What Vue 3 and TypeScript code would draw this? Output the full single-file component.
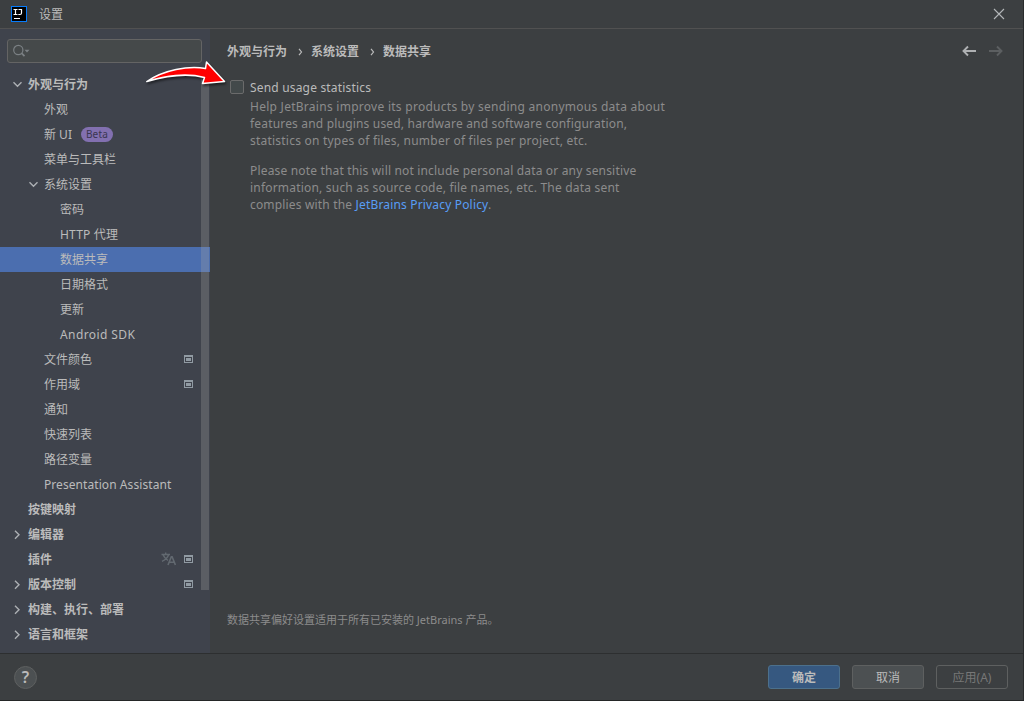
<script setup lang="ts">
interface TreeRow {
  label: string
  level: 0 | 1 | 2
  arrow?: 'open' | 'closed'
  badge?: string
  selected?: boolean
  project?: boolean
  translate?: boolean
  spacing?: string
}

interface HelpLine {
  text: string
  spacing: string
  link?: string
}

const rows: TreeRow[] = [
  { label: '外观与行为', level: 0, arrow: 'open' },
  { label: '外观', level: 1 },
  { label: '新 UI', level: 1, badge: 'Beta' },
  { label: '菜单与工具栏', level: 1 },
  { label: '系统设置', level: 1, arrow: 'open' },
  { label: '密码', level: 2 },
  { label: 'HTTP 代理', level: 2, spacing: '0.2px' },
  { label: '数据共享', level: 2, selected: true },
  { label: '日期格式', level: 2 },
  { label: '更新', level: 2 },
  { label: 'Android SDK', level: 2, spacing: '0.4px' },
  { label: '文件颜色', level: 1, project: true },
  { label: '作用域', level: 1, project: true },
  { label: '通知', level: 1 },
  { label: '快速列表', level: 1 },
  { label: '路径变量', level: 1 },
  { label: 'Presentation Assistant', level: 1, spacing: '0.07px' },
  { label: '按键映射', level: 0 },
  { label: '编辑器', level: 0, arrow: 'closed' },
  { label: '插件', level: 0, translate: true, project: true },
  { label: '版本控制', level: 0, arrow: 'closed', project: true },
  { label: '构建、执行、部署', level: 0, arrow: 'closed' },
  { label: '语言和框架', level: 0, arrow: 'closed' },
]

const crumbs: string[] = ['外观与行为', '系统设置', '数据共享']

const paragraphs: HelpLine[][] = [
  [
    { text: 'Help JetBrains improve its products by sending anonymous data about', spacing: '0.27px' },
    { text: 'features and plugins used, hardware and software configuration,', spacing: '0.18px' },
    { text: 'statistics on types of files, number of files per project, etc.', spacing: '0.22px' },
  ],
  [
    { text: 'Please note that this will not include personal data or any sensitive', spacing: '0.17px' },
    { text: 'information, such as source code, file names, etc. The data sent', spacing: '0.2px' },
    { text: 'complies with the ', link: 'JetBrains Privacy Policy', spacing: '0.17px' },
  ],
]
</script>

<template>
  <div class="window">
    <header class="titlebar">
      <svg class="logo" width="16" height="16" viewBox="0 0 16 16">
        <rect width="16" height="16" fill="#087cfa" />
        <rect x="1" y="1" width="14" height="14" fill="#000" />
        <path d="M2.500 3.500h4M4.500 3.500v5M2.500 8.500h4M7.500 3.500h3V7q0 1.500-1.500 1.500H7.300M3 12.500h6" fill="none" stroke="#fff" stroke-width="1.200" />
      </svg>
      <span class="title">设置</span>
      <svg class="close" width="12" height="12" viewBox="0 0 12 12">
        <path d="M1 1l10 10M11 1L1 11" stroke="#b4b7b9" stroke-width="1.1" />
      </svg>
    </header>

    <div class="body">
      <aside class="sidebar">
        <div class="search">
          <svg width="18" height="14" viewBox="0 0 18 14">
            <circle cx="6.3" cy="6" r="4.6" fill="none" stroke="#7b8084" stroke-width="1.2" />
            <path d="M9.500 9.200l3 3" stroke="#7b8084" stroke-width="1.8" />
            <path d="M12.500 5.800h5L15 8.600z" fill="#7b8084" />
          </svg>
        </div>
        <nav class="tree">
          <div v-for="row in rows" :key="row.label" class="row" :class="['level-' + row.level, { selected: row.selected }]">
            <span class="toggle">
              <svg v-if="row.arrow === 'open'" width="11" height="10" viewBox="0 0 11 10">
                <path d="M1.500 2.300l4 4 4-4" fill="none" stroke="#adb0b4" stroke-width="1.4" />
              </svg>
              <svg v-else-if="row.arrow === 'closed'" width="10" height="10" viewBox="0 0 10 10">
                <path d="M3 .7l4 4-4 4" fill="none" stroke="#adb0b4" stroke-width="1.4" />
              </svg>
            </span>
            <span :style="{ letterSpacing: row.spacing }">{{ row.label }}</span>
            <span v-if="row.badge" class="badge">{{ row.badge }}</span>
            <span class="marks">
              <svg v-if="row.translate" width="15" height="14" viewBox="0 0 15 14">
                <path d="M.5 2.500h8.500M4.700.4v2M7.600 2.800C6.800 5.500 4 8 1 9.400M2.200 3C3 5.300 5 7.200 7 8.500" fill="none" stroke="#626970" stroke-width="1.400" />
                <path d="M7 13l3.300-8.200h.8L14.400 13M8.200 10.300h5" fill="none" stroke="#626970" stroke-width="1.600" />
              </svg>
              <svg v-if="row.project" width="9" height="8" viewBox="0 0 9 8">
                <path d="M0 0h9v8H0zM1 2v5h7V2z" fill="#919ba3" fill-rule="evenodd" />
                <rect x="2" y="3" width="5" height="3" fill="#919ba3" />
              </svg>
            </span>
          </div>
          <div class="thumb"></div>
        </nav>
      </aside>

      <main class="content">
        <div class="crumbs">
          <template v-for="(crumb, i) in crumbs" :key="crumb">
            <svg v-if="i > 0" width="24" height="10" viewBox="0 0 24 10">
              <path d="M12 1.800l2.500 3.200-2.500 3.200" fill="none" stroke="#bbb" stroke-width="1.200" />
            </svg>
            <span>{{ crumb }}</span>
          </template>
          <div class="history">
            <svg width="14" height="12" viewBox="0 0 14 12">
              <path d="M14 6H2M6 1.500L1.500 6 6 10.500" fill="none" stroke="#afb1b3" stroke-width="1.900" />
            </svg>
            <svg width="14" height="12" viewBox="0 0 14 12">
              <path d="M0 6h12M8 1.500L12.500 6 8 10.500" fill="none" stroke="#5c5f61" stroke-width="1.900" />
            </svg>
          </div>
        </div>

        <div class="option">
          <span class="checkbox"></span>
          <span class="option-label">Send usage statistics</span>
        </div>
        <div class="help">
          <div v-for="(lines, i) in paragraphs" :key="i" class="paragraph">
            <div v-for="line in lines" :key="line.text" :style="{ letterSpacing: line.spacing }">{{ line.text }}<template v-if="line.link"><a>{{ line.link }}</a>.</template></div>
          </div>
        </div>
        <div class="note">数据共享偏好设置适用于所有已安装的 JetBrains 产品。</div>
      </main>
    </div>

    <footer class="footer">
      <span class="help-button">?</span>
      <div class="buttons">
        <button class="btn primary">确定</button>
        <button class="btn">取消</button>
        <button class="btn disabled">应用(A)</button>
      </div>
    </footer>

    <svg class="pointer" width="90" height="36" viewBox="0 0 90 36">
      <path d="M6.800 22.500C24 11 48 6.500 65.500 9.500L66.500 3 84.500 22.500 62.500 24.500 64.500 18.500C45 13.500 26 17 6.800 22.500z" fill="#f00" stroke="#fff" stroke-width="1.500" stroke-linejoin="round" />
    </svg>
  </div>
</template>

<style>
body {
  margin: 0;
  background: #3c3f41;
}
</style>

<style scoped>
.window {
  position: relative;
  box-sizing: border-box;
  width: 1024px;
  height: 701px;
  display: flex;
  flex-direction: column;
  overflow: hidden;
  border-right: 1px solid #292b2c;
  border-bottom: 1px solid #242627;
  background: #3c3f41;
  color: #bbb;
  font: 12px/17px "Noto Sans", "Noto Sans CJK SC", sans-serif;
}
.titlebar {
  box-sizing: border-box;
  height: 29px;
  flex: none;
  display: flex;
  align-items: center;
  padding: 0 18px 0 11px;
  border-bottom: 1px solid #515151;
}
.title {
  margin-left: 12px;
}
.close {
  margin-left: auto;
}
.body {
  display: flex;
  height: 624px;
  flex: none;
}
.sidebar {
  width: 210px;
  flex: none;
  display: flex;
  flex-direction: column;
  background: #3f434c;
}
.search {
  box-sizing: border-box;
  width: 195px;
  height: 24px;
  margin: 10px 0 9px 7px;
  flex: none;
  display: flex;
  align-items: center;
  padding-left: 4px;
  border: 1px solid #646464;
  border-radius: 3px;
  background: #45494a;
}
.tree {
  position: relative;
  flex: 1;
}
.row {
  height: 25px;
  box-sizing: border-box;
  display: flex;
  align-items: center;
  padding-right: 17px;
  white-space: nowrap;
}
.level-0 {
  padding-left: 12px;
  font-weight: 600;
}
.level-1 {
  padding-left: 28px;
}
.level-2 {
  padding-left: 44px;
}
.selected {
  background: #4b6eaf;
}
.toggle {
  width: 16px;
  height: 10px;
  flex: none;
  line-height: 0;
}
.badge {
  margin-left: 9px;
  width: 32px;
  height: 15px;
  border-radius: 8px;
  background: #8270b0;
  color: #3a3650;
  font-size: 10px;
  letter-spacing: 0.2px;
  line-height: 15px;
  text-align: center;
}
.marks {
  margin: 0 0 1px auto;
  display: flex;
  align-items: center;
  gap: 8px;
}
.thumb {
  position: absolute;
  top: 0;
  right: 1px;
  width: 8px;
  height: 518px;
  background: rgba(166, 166, 166, 0.28);
}
.content {
  flex: 1;
  display: flex;
  flex-direction: column;
  padding: 14px 20px 25px 17px;
}
.crumbs {
  display: flex;
  align-items: center;
  height: 17px;
  font-weight: 600;
}
.history {
  margin: 0 0 1px auto;
  display: flex;
  gap: 13px;
}
.option {
  display: flex;
  align-items: center;
  height: 17px;
  margin: 19px 0 0 3px;
}
.checkbox {
  box-sizing: border-box;
  width: 14px;
  height: 14px;
  margin: 0 6px 1px 0;
  border: 1px solid #6b6b6b;
  border-radius: 2px;
  background: #43494a;
}
.option-label {
  letter-spacing: 0.18px;
}
.help {
  margin: 2px 0 0 23px;
  color: #8c8c8c;
  white-space: pre;
}
.paragraph {
  margin-bottom: 13px;
}
.help a {
  color: #589df6;
}
.note {
  margin-top: auto;
  color: #8c8c8c;
  font-size: 11px;
}
.footer {
  box-sizing: border-box;
  flex: 1;
  display: flex;
  align-items: center;
  justify-content: space-between;
  padding: 1px 15px 0 14px;
  border-top: 1px solid #2d2f30;
}
.help-button {
  box-sizing: border-box;
  width: 23px;
  height: 23px;
  border: 1px solid #5e6060;
  border-radius: 50%;
  background: #4c5052;
  font-size: 16px;
  font-weight: 600;
  line-height: 21px;
  text-align: center;
}
.buttons {
  display: flex;
  gap: 12px;
  margin-bottom: 1px;
}
.btn {
  box-sizing: border-box;
  width: 72px;
  height: 24px;
  padding: 1px 0 0;
  border: 1px solid #5e6060;
  border-radius: 3px;
  background: #4c5052;
  color: #bbb;
  font: inherit;
}
.primary {
  border-color: #4c708c;
  background: #365880;
  font-weight: 600;
}
.disabled {
  background: transparent;
  color: #777;
}
.pointer {
  position: absolute;
  left: 140px;
  top: 59px;
  filter: drop-shadow(1px 2px 1px rgba(0, 0, 0, 0.5));
}
</style>
